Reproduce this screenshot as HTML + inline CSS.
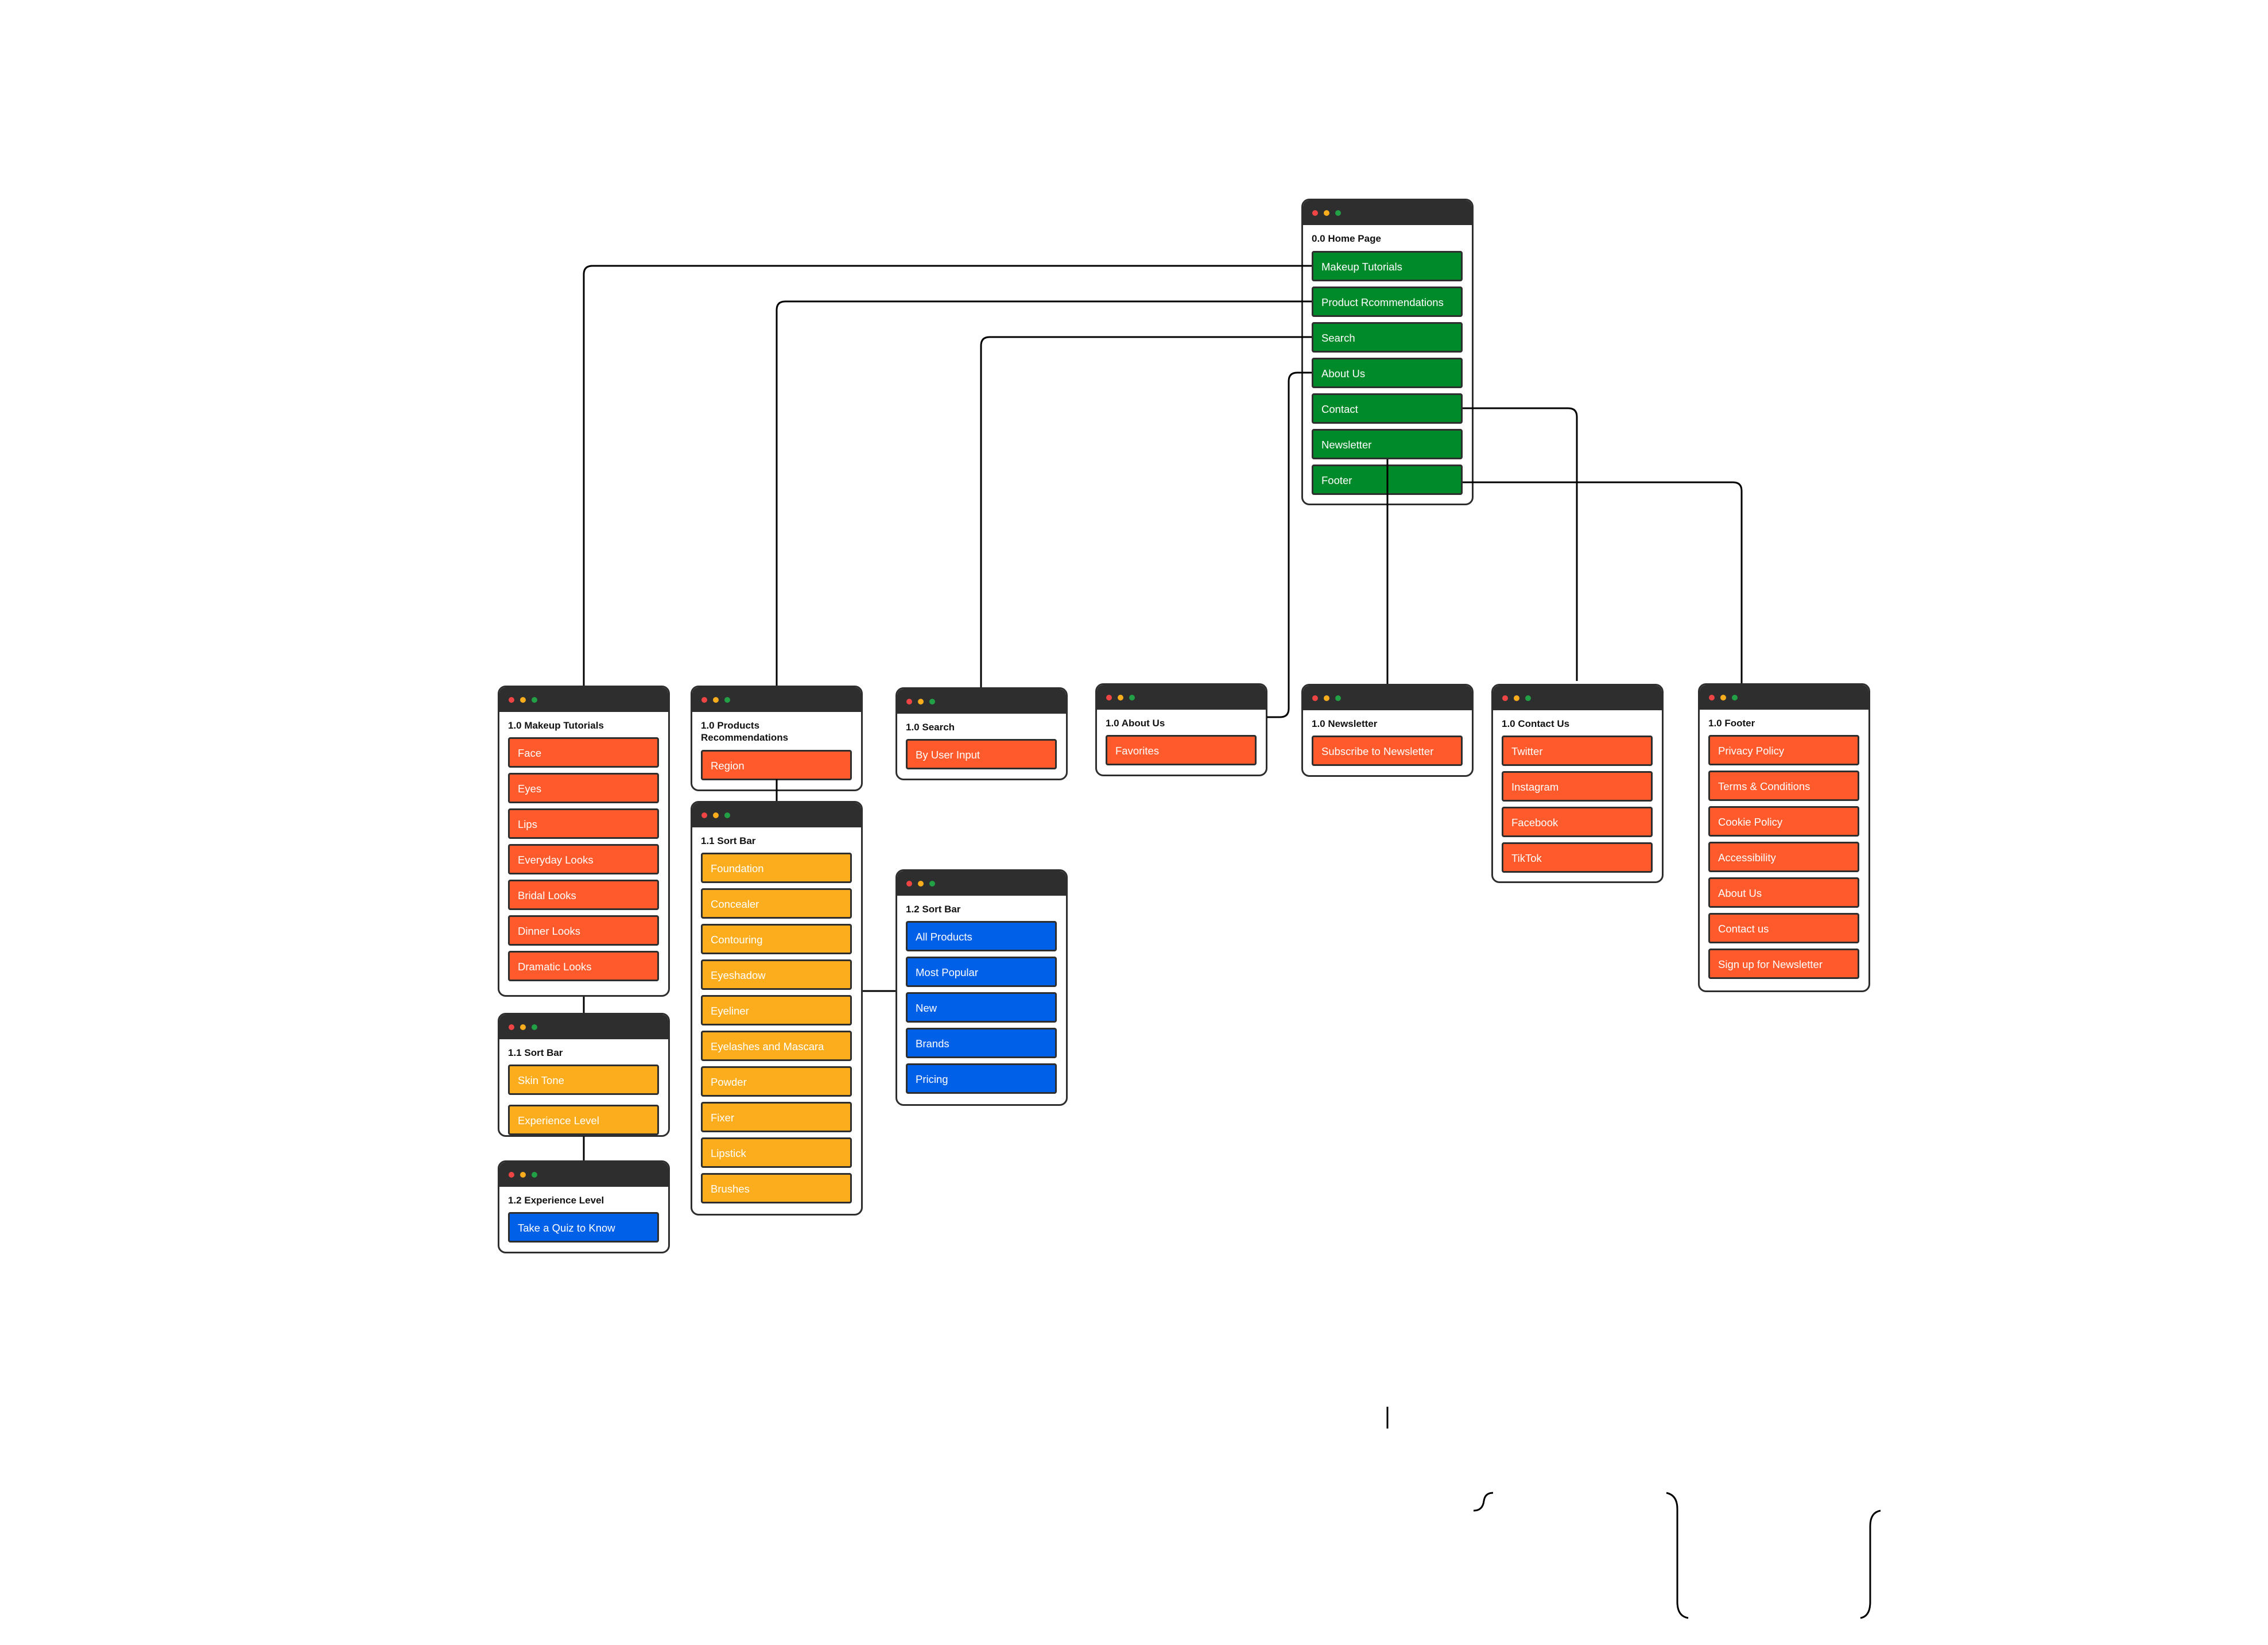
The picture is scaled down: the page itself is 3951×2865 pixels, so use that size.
<!DOCTYPE html>
<html><head><meta charset="utf-8"><style>
html,body{margin:0;padding:0;background:#fff}
body{width:3951px;height:2865px;position:relative;overflow:hidden;font-family:"Liberation Sans",Arial,sans-serif}
.c{position:absolute;width:300px;border:3px solid #2e2e2e;border-radius:14px;background:#fff;box-sizing:border-box;overflow:hidden}
.h{position:absolute;left:0;top:0;right:0;height:43px;background:#2e2e2e}
.d{position:absolute;top:17px;width:10px;height:10px;border-radius:50%}
.d1{left:16px;background:#ef4444}.d2{left:36px;background:#f9ad1d}.d3{left:56px;background:#22a045}
.t{position:absolute;left:15px;top:56px;font-weight:bold;font-size:17px;line-height:21px;color:#111}
.b{position:absolute;left:15px;width:263px;height:53px;box-sizing:border-box;border:3px solid #2e2e2e;border-radius:4px;color:#fff;font-size:18.5px;line-height:49px;padding-left:14px;white-space:nowrap}
.g{background:#008a29}.o{background:#ff5a2b}.y{background:#fcad1d}.u{background:#0060e8}
svg{position:absolute;left:0;top:0}
</style></head><body>

<div class="c" style="left:2267px;top:346px;height:534px">
<div class="h"><i class="d d1"></i><i class="d d2"></i><i class="d d3"></i></div>
<div class="t">0.0 Home Page</div>
<div class="b g" style="top:88px">Makeup Tutorials</div>
<div class="b g" style="top:150px">Product Rcommendations</div>
<div class="b g" style="top:212px">Search</div>
<div class="b g" style="top:274px">About Us</div>
<div class="b g" style="top:336px">Contact</div>
<div class="b g" style="top:398px">Newsletter</div>
<div class="b g" style="top:460px">Footer</div>
</div>

<div class="c" style="left:867px;top:1194px;height:542px">
<div class="h"><i class="d d1"></i><i class="d d2"></i><i class="d d3"></i></div>
<div class="t">1.0 Makeup Tutorials</div>
<div class="b o" style="top:87px">Face</div>
<div class="b o" style="top:149px">Eyes</div>
<div class="b o" style="top:211px">Lips</div>
<div class="b o" style="top:273px">Everyday Looks</div>
<div class="b o" style="top:335px">Bridal Looks</div>
<div class="b o" style="top:397px">Dinner Looks</div>
<div class="b o" style="top:459px">Dramatic Looks</div>
</div>

<div class="c" style="left:867px;top:1764px;height:216px">
<div class="h"><i class="d d1"></i><i class="d d2"></i><i class="d d3"></i></div>
<div class="t">1.1 Sort Bar</div>
<div class="b y" style="top:87px">Skin Tone</div>
<div class="b y" style="top:157px">Experience Level</div>
</div>

<div class="c" style="left:867px;top:2021px;height:162px">
<div class="h"><i class="d d1"></i><i class="d d2"></i><i class="d d3"></i></div>
<div class="t">1.2 Experience Level</div>
<div class="b u" style="top:87px">Take a Quiz to Know</div>
</div>

<div class="c" style="left:1203px;top:1194px;height:184px">
<div class="h"><i class="d d1"></i><i class="d d2"></i><i class="d d3"></i></div>
<div class="t">1.0 Products<br>Recommendations</div>
<div class="b o" style="top:109px">Region</div>
</div>

<div class="c" style="left:1203px;top:1395px;height:722px">
<div class="h"><i class="d d1"></i><i class="d d2"></i><i class="d d3"></i></div>
<div class="t">1.1 Sort Bar</div>
<div class="b y" style="top:87px">Foundation</div>
<div class="b y" style="top:149px">Concealer</div>
<div class="b y" style="top:211px">Contouring</div>
<div class="b y" style="top:273px">Eyeshadow</div>
<div class="b y" style="top:335px">Eyeliner</div>
<div class="b y" style="top:397px">Eyelashes and Mascara</div>
<div class="b y" style="top:459px">Powder</div>
<div class="b y" style="top:521px">Fixer</div>
<div class="b y" style="top:583px">Lipstick</div>
<div class="b y" style="top:645px">Brushes</div>
</div>

<div class="c" style="left:1560px;top:1197px;height:162px">
<div class="h"><i class="d d1"></i><i class="d d2"></i><i class="d d3"></i></div>
<div class="t">1.0 Search</div>
<div class="b o" style="top:87px">By User Input</div>
</div>

<div class="c" style="left:1560px;top:1514px;height:412px">
<div class="h"><i class="d d1"></i><i class="d d2"></i><i class="d d3"></i></div>
<div class="t">1.2 Sort Bar</div>
<div class="b u" style="top:87px">All Products</div>
<div class="b u" style="top:149px">Most Popular</div>
<div class="b u" style="top:211px">New</div>
<div class="b u" style="top:273px">Brands</div>
<div class="b u" style="top:335px">Pricing</div>
</div>

<div class="c" style="left:1908px;top:1190px;height:162px">
<div class="h"><i class="d d1"></i><i class="d d2"></i><i class="d d3"></i></div>
<div class="t">1.0 About Us</div>
<div class="b o" style="top:87px">Favorites</div>
</div>

<div class="c" style="left:2267px;top:1191px;height:162px">
<div class="h"><i class="d d1"></i><i class="d d2"></i><i class="d d3"></i></div>
<div class="t">1.0 Newsletter</div>
<div class="b o" style="top:87px">Subscribe to Newsletter</div>
</div>

<div class="c" style="left:2598px;top:1191px;height:347px">
<div class="h"><i class="d d1"></i><i class="d d2"></i><i class="d d3"></i></div>
<div class="t">1.0 Contact Us</div>
<div class="b o" style="top:87px">Twitter</div>
<div class="b o" style="top:149px">Instagram</div>
<div class="b o" style="top:211px">Facebook</div>
<div class="b o" style="top:273px">TikTok</div>
</div>

<div class="c" style="left:2958px;top:1190px;height:538px">
<div class="h"><i class="d d1"></i><i class="d d2"></i><i class="d d3"></i></div>
<div class="t">1.0 Footer</div>
<div class="b o" style="top:87px">Privacy Policy</div>
<div class="b o" style="top:149px">Terms &amp; Conditions</div>
<div class="b o" style="top:211px">Cookie Policy</div>
<div class="b o" style="top:273px">Accessibility</div>
<div class="b o" style="top:335px">About Us</div>
<div class="b o" style="top:397px">Contact us</div>
<div class="b o" style="top:459px">Sign up for Newsletter</div>
</div>

<svg width="3951" height="2865" viewBox="0 0 3951 2865" fill="none" stroke="#000" stroke-width="3">
<path d="M2285 463 H1032 Q1017 463 1017 478 V1194"/>
<path d="M2285 525 H1368 Q1353 525 1353 540 V1194"/>
<path d="M2285 587 H1724 Q1709 587 1709 602 V1197"/>
<path d="M2285 649 H2260 Q2245 649 2245 664 V1234 Q2245 1249 2230 1249 H2207"/>
<path d="M2417 800 V1191"/>
<path d="M2548 711 H2732 Q2747 711 2747 726 V1186"/>
<path d="M2548 840 H3019 Q3034 840 3034 855 V1190"/>
<path d="M1017 1736 V1764"/>
<path d="M1017 1979 V2021"/>
<path d="M1353 1357 V1395"/>
<path d="M1503 1726 H1560"/>
<path d="M2417 2450 V2488"/>
<path d="M2601 2600 Q2587 2600 2585 2614 Q2583 2631 2567 2631"/>
<path d="M2903 2600 Q2922 2604 2922 2628 V2790 Q2922 2815 2941 2818"/>
<path d="M3276 2631 Q3258 2634 3258 2658 V2790 Q3258 2815 3241 2818"/>
</svg>
</body></html>
